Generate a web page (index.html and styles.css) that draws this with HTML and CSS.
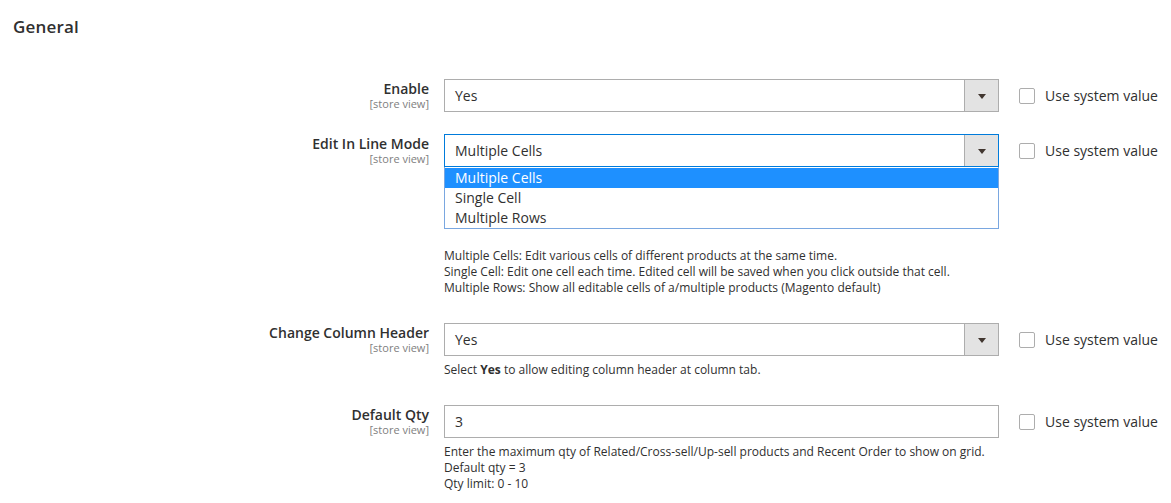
FILE: index.html
```html
<!DOCTYPE html>
<html>
<head>
<meta charset="utf-8">
<link rel="stylesheet" href="styles.css">
</head>
<body>
<div class="page">
  <h2 class="section-title">General</h2>
  <div class="fields">
    <div class="row">
      <div class="label"><span class="label-text">Enable</span><span class="scope">[store view]</span></div>
      <div class="control">
        <div class="select"><span class="value">Yes</span><span class="btn"><span class="arrow"></span></span></div>
      </div>
      <label class="use-default"><span class="checkbox"></span><span>Use system value</span></label>
    </div>
    <div class="row">
      <div class="label"><span class="label-text">Edit In Line Mode</span><span class="scope">[store view]</span></div>
      <div class="control">
        <div class="select focus"><span class="value">Multiple Cells</span><span class="btn"><span class="arrow"></span></span></div>
        <ul class="options">
          <li class="option selected">Multiple Cells</li>
          <li class="option">Single Cell</li>
          <li class="option">Multiple Rows</li>
        </ul>
        <div class="note note-wide">Multiple Cells: Edit various cells of different products at the same time.<br>Single Cell: Edit one cell each time. Edited cell will be saved when you click outside that cell.<br>Multiple Rows: Show all editable cells of a/multiple products (Magento default)</div>
      </div>
      <label class="use-default"><span class="checkbox"></span><span>Use system value</span></label>
    </div>
    <div class="row">
      <div class="label"><span class="label-text">Change Column Header</span><span class="scope">[store view]</span></div>
      <div class="control">
        <div class="select"><span class="value">Yes</span><span class="btn"><span class="arrow"></span></span></div>
        <div class="note">Select <b>Yes</b> to allow editing column header at column tab.</div>
      </div>
      <label class="use-default"><span class="checkbox"></span><span>Use system value</span></label>
    </div>
    <div class="row">
      <div class="label"><span class="label-text">Default Qty</span><span class="scope">[store view]</span></div>
      <div class="control">
        <div class="input"><span class="value">3</span></div>
        <div class="note">Enter the maximum qty of Related/Cross-sell/Up-sell products and Recent Order to show on grid.<br>Default qty = 3<br>Qty limit: 0 - 10</div>
      </div>
      <label class="use-default"><span class="checkbox"></span><span>Use system value</span></label>
    </div>
  </div>
</div>
</body>
</html>
```
FILE: styles.css
```css
* { box-sizing: border-box; }
html, body { margin: 0; padding: 0; background: #fff; }
body {
  font-family: "Open Sans", "Noto Sans", sans-serif;
  color: #303030;
  font-size: 14px;
}
.page { padding: 17px 0 0 13px; }
.section-title {
  margin: 0;
  font-size: 17px;
  font-weight: 600;
  line-height: 20px;
  color: #303030;
  letter-spacing: 0.2px;
}
.fields { padding-top: 42px; display: flex; flex-direction: column; }
.row { display: flex; align-items: flex-start; margin-bottom: 22px; }
.label {
  width: 416px;
  margin-right: 15px;
  display: flex;
  flex-direction: column;
  align-items: flex-end;
  padding-top: 1px;
}
.label-text { font-size: 14px; font-weight: 600; line-height: 18px; }
.scope { font-size: 11px; color: #808080; line-height: 14px; margin-top: -1px; }
.control { width: 555px; display: flex; flex-direction: column; }
.select, .input {
  height: 33px;
  border: 1px solid #adadad;
  display: flex;
  align-items: center;
  background: #fff;
}
.select.focus { border-color: #007bdb; }
.value { flex: 1; padding-left: 10px; font-size: 14px; line-height: 18px; }
.btn {
  width: 34px;
  height: 100%;
  background: #e3e3e3;
  border-left: 1px solid #adadad;
  display: flex;
  align-items: center;
  justify-content: center;
}
.arrow {
  width: 0; height: 0;
  border-left: 4px solid transparent;
  border-right: 4px solid transparent;
  border-top: 5px solid #41362f;
  margin-top: 1px;
}
.options {
  list-style: none;
  margin: 0;
  padding: 1px 0 0;
  border: 1px solid #7aa7e0;
  border-top: none;
}
.option { height: 20px; line-height: 20px; padding-left: 10px; font-size: 14px; color: #303030; }
.option.selected { background: #1e90ff; color: #fff; }
.note { font-size: 12px; line-height: 16px; margin-top: 6px; margin-bottom: 5px; color: #303030; }
.note b { font-weight: 700; }
.note-wide { margin-top: 19px; }
.use-default {
  display: flex;
  align-items: center;
  margin-left: 20px;
  height: 33px;
  font-size: 14px;
  white-space: nowrap;
}
.checkbox {
  width: 16px; height: 16px;
  border: 1px solid #adadad;
  border-radius: 2px;
  margin-right: 10px;
  background: #fff;
}
```
